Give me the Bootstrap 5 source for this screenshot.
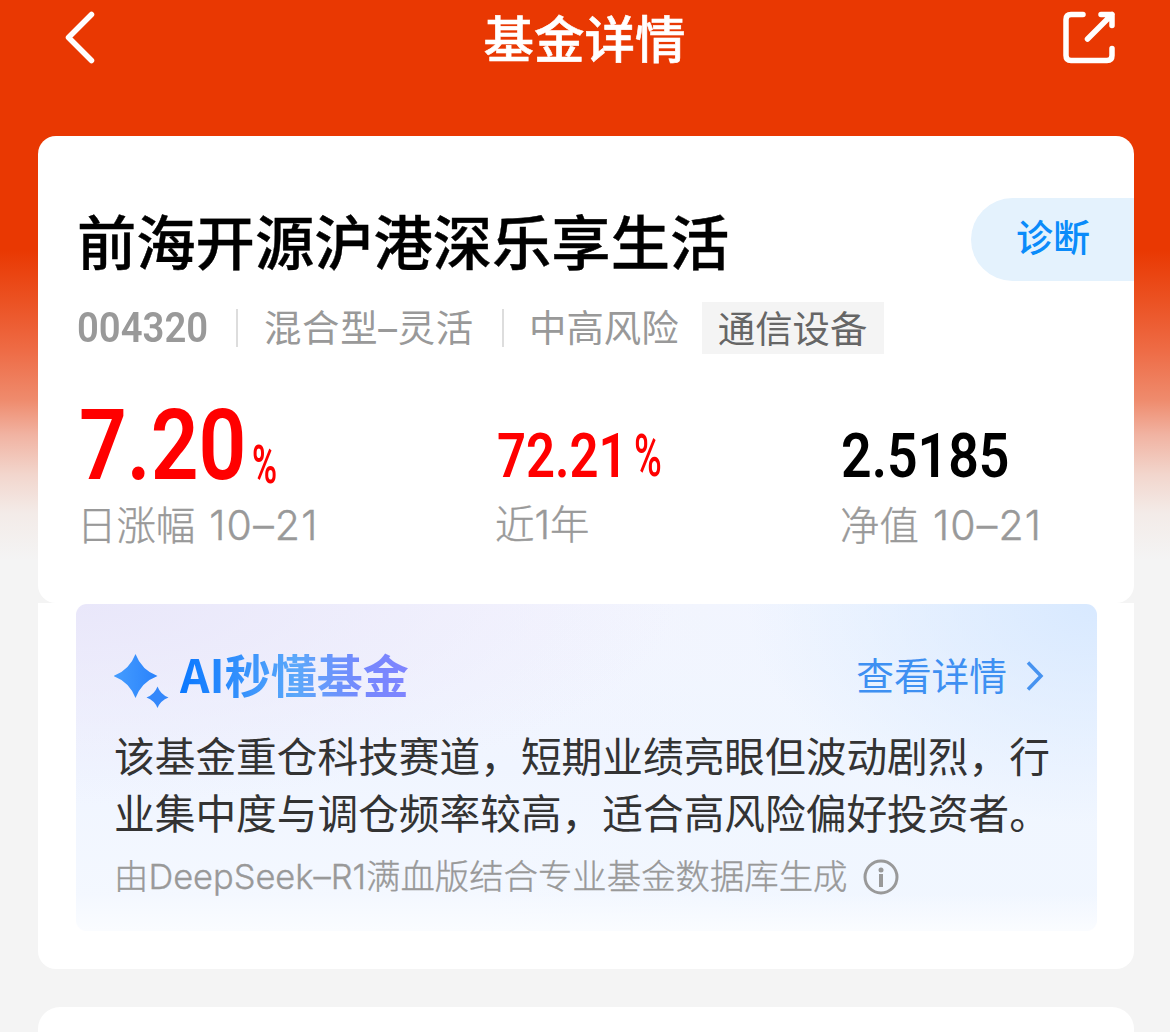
<!DOCTYPE html>
<html lang="zh-CN">
<head>
    <meta charset="UTF-8">
    <meta name="viewport" content="width=device-width, initial-scale=1.0">
    <title>基金详情</title>
    <link rel="stylesheet" href="https://cdn.jsdelivr.net/npm/bootstrap@5.3.0/dist/css/bootstrap.min.css">
    <style>
        body {
            font-family: Inter, "Noto Sans CJK SC", sans-serif;
            background: #f4f4f4;
            color: #000;
            height: 1032px;
            overflow: hidden;
        }
        .page {
            height: 1032px;
            overflow: hidden;
            background: linear-gradient(#e93802 0, #e93802 250px, #eb5122 300px, #ee6b45 350px, #ef8b6d 400px, #f1b3a2 435px, #f2d6cd 475px, #f3ebe8 513px, #f4f4f4 560px);
        }
        .topbar {
            height: 136px;
            padding: 11px 53px 0 65px;
        }
        .topbar h1 {
            padding: 1px 11px 0 0;
            font-size: 50.5px;
            line-height: 56px;
            font-weight: 500;
            -webkit-text-stroke: .6px #fff;
        }
        .panel {
            margin: 0 36px 0 38px;
            background: #fff;
        }
        .summary {
            height: 467px;
            border-radius: 18px;
            padding: 62px 0 0 39px;
        }
        .fund-name {
            height: 83px;
            font-size: 59.3px;
            line-height: 91px;
            font-weight: 500;
            -webkit-text-stroke: .4px #000;
        }
        .diagnose {
            width: 163px;
            height: 83px;
            padding-left: 45px;
            border-radius: 42px 0 0 42px;
            background: #e4f2fd;
            color: #0a8bfa;
            font-size: 37px;
            line-height: 82px;
            font-weight: 500;
        }
        .meta {
            margin-top: 21px;
            height: 52px;
            font-size: 37.4px;
            line-height: 55px;
            color: #999;
        }
        .rule {
            width: 2px;
            height: 38px;
            background: #ddd;
        }
        .type {
            width: 211px;
            margin: 0 27px 0 26px;
            letter-spacing: .7px;
        }
        .risk { margin: 0 23px 0 25px; }
        .sector {
            width: 182px;
            height: 52px;
            background: #f4f4f4;
            color: #666;
            text-align: center;
        }
        /* narrow figures */
        .num {
            display: inline-block;
            font-family: Roboto, sans-serif;
            font-weight: 600;
            transform-origin: left;
            white-space: nowrap;
        }
        .code { width: 159px; font-size: 42.5px; line-height: 54px; transform: scaleX(.9); }
        .figures { margin-top: 40px; }
        .figure-row { height: 104px; line-height: 104px; }
        .up { color: #f00; }
        .day { width: 173px; margin-left: 2px; font-size: 98px; transform: scaleX(.855); }
        .day-pct { font-size: 54px; transform: scaleX(.63); padding-top: 19px; }
        .year { width: 137px; margin-left: 2px; font-size: 62px; transform: scaleX(.82); }
        .year-pct { font-size: 60px; transform: scaleX(.63); font-weight: 500; }
        .value { margin-left: 1px; font-size: 62px; transform: scaleX(.865); }
        .mid { padding-top: 10px; }
        .caption-line {
            font-size: 39.4px;
            line-height: 54px;
            font-weight: 300;
            color: #999;
            white-space: nowrap;
            -webkit-text-stroke: .4px #999;
        }
        .date {
            margin-left: 3px;
            font-size: 41px;
            letter-spacing: 1.2px;
        }
        .col-day { width: 418px; }
        .col-year { width: 345px; }
        .insight {
            height: 366px;
            border-radius: 0 0 18px 18px;
            padding: 1px 37px 0 38px;
        }
        .ai-box {
            height: 327px;
            border-radius: 11px;
            padding: 39px 0 0 38px;
            background:
                linear-gradient(rgba(250, 252, 255, 0) 290px, #fafcff 326px),
                radial-gradient(ellipse 350px 220px at 100% 0, #d8e9ff, rgba(216, 233, 255, 0)),
                radial-gradient(ellipse 600px 200px at 0 0, #e9e7fa, rgba(233, 231, 250, 0)),
                linear-gradient(90deg, rgba(240, 246, 255, 0) 40%, rgba(240, 246, 255, .8) 75%),
                linear-gradient(#f4f4fe, #f0f5ff 50%, #f4f8ff 90%);
        }
        .ai-title {
            width: 232px;
            margin-left: 10px;
            font: 700 46px/61px "Noto Sans CJK SC", sans-serif;
            background: linear-gradient(90deg, #0a78ff, #5ca8fa 50%, #7588fd 78%, #8084ff);
            -webkit-background-clip: text;
            background-clip: text;
            color: transparent;
            white-space: nowrap;
        }
        .more {
            height: 66px;
            font-size: 37.7px;
            line-height: 58px;
            color: #3e90f2;
            margin-right: 52px;
        }
        .advice {
            margin: 20px 0 0;
            font-size: 40.7px;
            line-height: 57px;
            color: #333;
            white-space: nowrap;
        }
        .source {
            margin-top: 9px;
            font-size: 34.4px;
            line-height: 50px;
            color: #999;
            font-weight: 300;
            white-space: nowrap;
            -webkit-text-stroke: .35px #999;
        }
        .next-panel {
            height: 60px;
            margin-top: 38px;
            border-radius: 22px 22px 0 0;
        }
        svg { display: block; flex: none; }
    </style>
</head>
<body>
    <div class="page">
        <header class="topbar d-flex justify-content-between align-items-start">
            <svg width="52" height="54" viewBox="0 0 52 54" fill="none" stroke="#fff" stroke-width="5.500" stroke-linecap="round" stroke-linejoin="round">
                <path d="M26.500 3.500 3.500 26.500 26.500 49.500"/>
            </svg>
            <h1 class="m-0 text-white">基金详情</h1>
            <svg width="54" height="54" viewBox="0 0 54 54" fill="none" stroke="#fff" stroke-width="5.500" stroke-linecap="round" stroke-linejoin="round">
                <path d="M20 3.500H8Q3 3.500 3 8.500V44.500Q3 49.500 8 49.500H44Q49 49.500 49 44.500V37.500M38 3.500H49V14.500M49 3.500 24.500 28"/>
            </svg>
        </header>

        <section class="panel summary">
            <div class="d-flex justify-content-between">
                <div class="fund-name">前海开源沪港深乐享生活</div>
                <div class="diagnose">诊断</div>
            </div>
            <div class="meta d-flex align-items-center">
                <span class="num code">004320</span>
                <span class="rule"></span>
                <span class="type">混合型–灵活</span>
                <span class="rule"></span>
                <span class="risk">中高风险</span>
                <span class="sector">通信设备</span>
            </div>
            <div class="figures d-flex">
                <div class="col-day">
                    <div class="figure-row up d-flex">
                        <span class="num day">7.20</span>
                        <span class="num day-pct">%</span>
                    </div>
                    <div class="caption-line">日涨幅 <span class="date">10–21</span></div>
                </div>
                <div class="col-year">
                    <div class="figure-row mid up d-flex">
                        <span class="num year">72.21</span>
                        <span class="num year-pct">%</span>
                    </div>
                    <div class="caption-line">近1年</div>
                </div>
                <div>
                    <div class="figure-row mid">
                        <span class="num value">2.5185</span>
                    </div>
                    <div class="caption-line">净值 <span class="date">10–21</span></div>
                </div>
            </div>
        </section>

        <section class="panel insight">
            <div class="ai-box">
                <div class="d-flex">
                    <svg class="mt-1" width="56" height="62" viewBox="0 0 56 62">
                        <defs>
                            <linearGradient id="spark" x1="0" x2="1">
                                <stop offset="0" stop-color="#459dff"/>
                                <stop offset="1" stop-color="#2a82fb"/>
                            </linearGradient>
                        </defs>
                        <path fill="url(#spark)" d="M21.500 7Q27.500 23 43.500 29Q27.500 35 21.500 51Q15.500 35-.5 29Q15.500 23 21.500 7Z"/>
                        <path fill="#3488fb" d="M43.500 39.500Q46.500 47.500 54.500 50.500Q46.500 53.500 43.500 61Q40.500 53.500 32.500 50.500Q40.500 47.500 43.500 39.500Z"/>
                    </svg>
                    <div class="ai-title">AI秒懂基金</div>
                    <div class="more ms-auto d-flex align-items-center">
                        查看详情
                        <svg class="ms-3" width="22" height="32" viewBox="0 0 22 32" fill="none" stroke="#4793f0" stroke-width="3.500">
                            <path d="M5 2.500 18 16 5 29.500"/>
                        </svg>
                    </div>
                </div>
                <p class="advice">该基金重仓科技赛道，短期业绩亮眼但波动剧烈，行<br>业集中度与调仓频率较高，适合高风险偏好投资者。</p>
                <div class="source d-flex align-items-center">
                    由DeepSeek–R1满血版结合专业基金数据库生成
                    <svg class="ms-3" width="36" height="36" viewBox="0 0 36 36" fill="none" stroke="#999">
                        <circle cx="18" cy="18" r="16" stroke-width="3"/>
                        <path stroke-width="4" d="M18 15V28"/>
                        <circle cx="18" cy="11" r="2.500" fill="#999" stroke="none"/>
                    </svg>
                </div>
            </div>
        </section>

        <section class="panel next-panel"></section>
    </div>
    <script src="https://cdn.jsdelivr.net/npm/bootstrap@5.3.0/dist/js/bootstrap.bundle.min.js"></script>
</body>
</html>
